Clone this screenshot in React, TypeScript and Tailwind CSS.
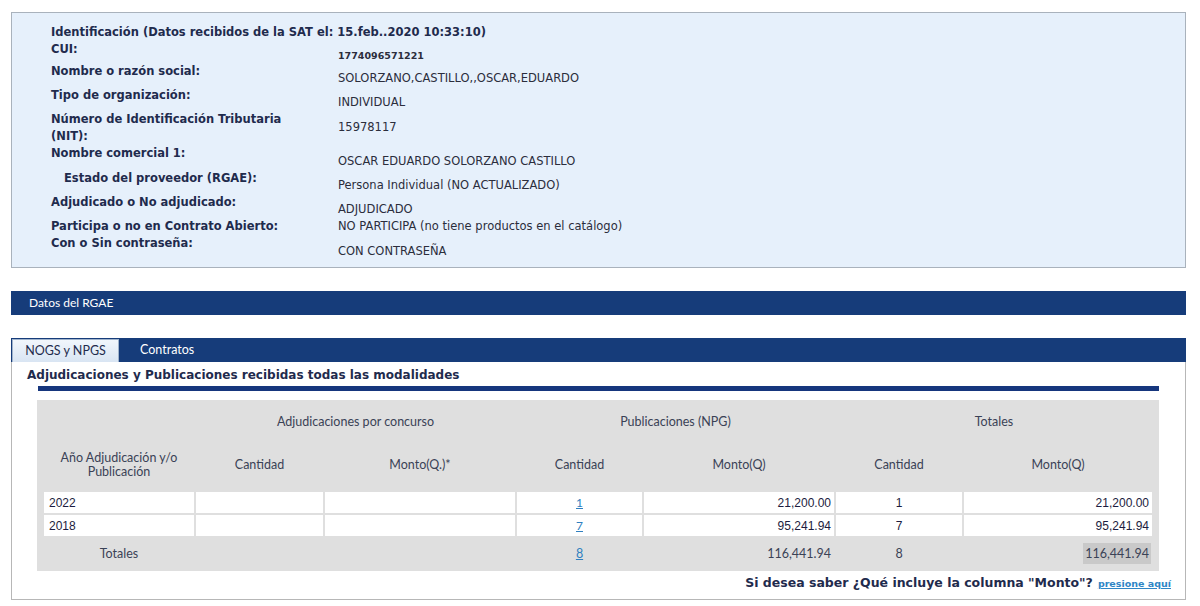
import React from 'react';

const verdana = "font-['DejaVu_Sans',Verdana,sans-serif]";
const lato = "font-['Lato','Open_Sans',sans-serif]";
const arial = "font-['Liberation_Sans',Arial,sans-serif]";

type InfoRow = {
  label: React.ReactNode;
  value: string;
  h: string;
  pt: string;
  labelCls?: string;
  valueCls?: string;
};

const infoRows: InfoRow[] = [
  { label: 'CUI:', value: '1774096571221', h: 'h-[22px]', pt: 'pt-[6px]', valueCls: 'text-[9.5px] font-bold' },
  { label: 'Nombre o razón social:', value: 'SOLORZANO,CASTILLO,,OSCAR,EDUARDO', h: 'h-[24px]', pt: 'pt-[7px]' },
  { label: 'Tipo de organización:', value: 'INDIVIDUAL', h: 'h-[24px]', pt: 'pt-[7px]' },
  {
    label: (
      <>
        Número de Identificación Tributaria
        <br />
        (NIT):
      </>
    ),
    value: '15978117',
    h: 'h-[34px]',
    pt: 'pt-[8px]',
  },
  { label: 'Nombre comercial 1:', value: 'OSCAR EDUARDO SOLORZANO CASTILLO', h: 'h-[25px]', pt: 'pt-[8px]' },
  {
    label: 'Estado del proveedor (RGAE):',
    value: 'Persona Individual (NO ACTUALIZADO)',
    h: 'h-[24px]',
    pt: 'pt-[7px]',
    labelCls: 'pl-[13px]',
  },
  { label: 'Adjudicado o No adjudicado:', value: 'ADJUDICADO', h: 'h-[24px]', pt: 'pt-[7px]' },
  {
    label: 'Participa o no en Contrato Abierto:',
    value: 'NO PARTICIPA (no tiene productos en el catálogo)',
    h: 'h-[17px]',
    pt: 'pt-0',
  },
  { label: 'Con o Sin contraseña:', value: 'CON CONTRASEÑA', h: 'h-[17px]', pt: 'pt-[8px]' },
];

type YearRow = { year: string; pubs: string; monto: string; total: string; totalMonto: string };

const yearRows: YearRow[] = [
  { year: '2022', pubs: '1', monto: '21,200.00', total: '1', totalMonto: '21,200.00' },
  { year: '2018', pubs: '7', monto: '95,241.94', total: '7', totalMonto: '95,241.94' },
];

const gridCols =
  'grid grid-cols-[150px_127px_190px_125px_190px_126px_188px] gap-x-[2px]';

function Identificacion() {
  return (
    <div className="ml-[11px] mt-[12px] h-[256px] w-[1175px] border border-[#a9b2bc] bg-[#e6f0fb] pl-[39px] pt-[11px]">
      <div className={`${verdana} text-[11.5px] font-bold leading-[17px] text-[#1f2b4d]`}>
        Identificación (Datos recibidos de la SAT el: 15.feb..2020 10:33:10)
      </div>
      {infoRows.map((row, i) => (
        <div key={i} className={`flex ${row.h}`}>
          <div
            className={`w-[287px] shrink-0 ${verdana} text-[11.5px] font-bold leading-[17px] text-[#1f2b4d] ${row.labelCls ?? ''}`}
          >
            {row.label}
          </div>
          <div
            className={`${row.pt} ${verdana} leading-[17px] text-[#2b2d3c] ${row.valueCls ?? 'text-[11.5px]'}`}
          >
            {row.value}
          </div>
        </div>
      ))}
    </div>
  );
}

function Link({ children, className = '' }: { children: React.ReactNode; className?: string }) {
  return <span className={`text-[#2f7fc0] underline ${className}`}>{children}</span>;
}

function AdjTable() {
  return (
    <div className={`ml-[25px] mt-[9px] w-[1122px] bg-[#dfdfdf] px-[7px] ${lato} text-[12.5px] text-[#3a4256]`}>
      <div className="flex flex-col gap-y-[2px]">
        <div className={`${gridCols} h-[44px] items-center text-center`}>
          <div />
          <div className="col-span-2">Adjudicaciones por concurso</div>
          <div className="col-span-2">Publicaciones (NPG)</div>
          <div className="col-span-2">Totales</div>
        </div>
        <div className={`${gridCols} h-[44px] items-center pb-[6px] text-center leading-[14px]`}>
          <div>
            Año Adjudicación y/o
            <br />
            Publicación
          </div>
          <div>Cantidad</div>
          <div>Monto(Q.)*</div>
          <div>Cantidad</div>
          <div>Monto(Q)</div>
          <div>Cantidad</div>
          <div>Monto(Q)</div>
        </div>
        {yearRows.map((r) => (
          <div key={r.year} className={`${gridCols} h-[21px] ${arial} text-[12px] text-[#1c1c40]`}>
            <div className="flex items-center bg-white pl-[5px]">{r.year}</div>
            <div className="bg-white" />
            <div className="bg-white" />
            <div className="flex items-center justify-center bg-white">
              <Link className={lato}>{r.pubs}</Link>
            </div>
            <div className="flex items-center justify-end bg-white pr-[3px]">{r.monto}</div>
            <div className="flex items-center justify-center bg-white">{r.total}</div>
            <div className="flex items-center justify-end bg-white pr-[3px]">{r.totalMonto}</div>
          </div>
        ))}
        <div className={`${gridCols} h-[33px] items-center`}>
          <div className="text-center">Totales</div>
          <div />
          <div />
          <div className="text-center">
            <Link>8</Link>
          </div>
          <div className="pr-[3px] text-right">116,441.94</div>
          <div className="text-center">8</div>
          <div className="pr-[1px] text-right">
            <span className="bg-[#c9c9c9] px-[2px] py-[3px]">116,441.94</span>
          </div>
        </div>
      </div>
    </div>
  );
}

export default function App() {
  return (
    <div className="h-[606px] w-[1200px] overflow-hidden bg-white">
      <Identificacion />

      <div className="ml-[11px] mt-[23px] flex h-[24px] w-[1175px] items-center bg-[#163c7a] pl-[18px]">
        <span className={`${lato} text-[12px] text-white`}>Datos del RGAE</span>
      </div>

      <div className="ml-[11px] mt-[23px] w-[1175px]">
        <div className="flex h-[24px] items-end bg-[#163c7a] pl-[1px]">
          <div
            className={`flex h-[23px] w-[107px] items-center justify-center border border-b-0 border-[#9fb3cc] bg-gradient-to-b from-[#f1f6fc] to-[#d9e5f3] ${lato} text-[12.5px] text-[#1f2b4d]`}
          >
            NOGS y NPGS
          </div>
          <div className={`flex h-[23px] items-center pl-[21px] ${lato} text-[12.5px] text-white`}>
            Contratos
          </div>
        </div>
        <div className="h-[238px] border border-t-0 border-[#b7b7b7] bg-white">
          <div
            className={`pl-[15px] pt-[5px] ${verdana} text-[12px] font-bold leading-[17px] text-[#1f2b4d]`}
          >
            Adjudicaciones y Publicaciones recibidas todas las modalidades
          </div>
          <div className="ml-[26px] mt-[2px] h-[5px] w-[1121px] bg-[#16367d]" />
          <AdjTable />
          <div className="flex items-baseline justify-end pr-[14px] pt-[3px]">
            <span className={`${verdana} text-[12.5px] font-bold text-[#1f2b4d]`}>
              Si desea saber ¿Qué incluye la columna "Monto"?
            </span>
            <span className={`ml-[5px] ${verdana} text-[9.5px] font-bold text-[#2f86c6] underline`}>
              presione aquí
            </span>
          </div>
        </div>
      </div>
    </div>
  );
}
